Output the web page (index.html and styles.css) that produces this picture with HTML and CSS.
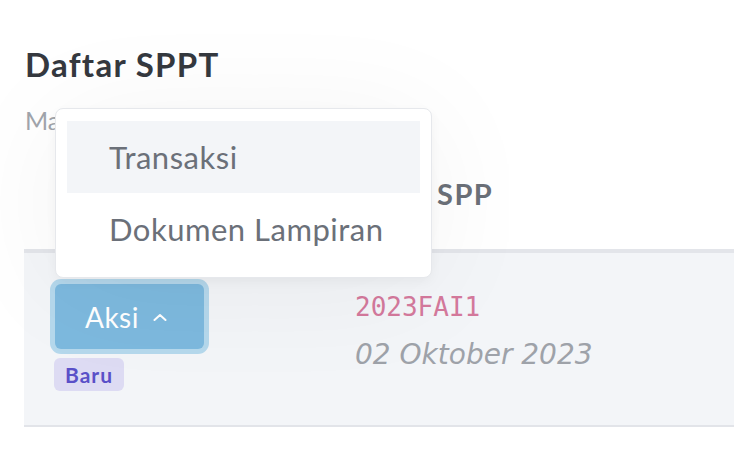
FILE: index.html
```html
<!DOCTYPE html>
<html lang="id">
<head>
    <meta charset="UTF-8">
    <meta name="viewport" content="width=device-width, initial-scale=1.0">
    <title>Daftar SPPT</title>
    <link rel="stylesheet" href="styles.css">
</head>
<body>
    <div class="card">
        <h1 class="title">Daftar SPPT</h1>
        <p class="subtitle">Manajemen data SPPT</p>

        <table class="sppt-table">
            <thead>
                <tr>
                    <th class="col-action"></th>
                    <th class="col-spp">SPP</th>
                </tr>
            </thead>
            <tbody>
                <tr>
                    <td class="col-action">
                        <div class="action-wrap">
                            <button class="btn-aksi" type="button">
                                Aksi
                                <svg class="chevron" viewBox="0 0 14 8" width="14" height="8" aria-hidden="true">
                                    <path d="M1.5 7 L7 2 L12.5 7" fill="none" stroke="#fff" stroke-width="2" stroke-linecap="round" stroke-linejoin="round"/>
                                </svg>
                            </button>
                            <span class="badge">Baru</span>

                            <ul class="dropdown">
                                <li class="dropdown-item active">Transaksi</li>
                                <li class="dropdown-item">Dokumen Lampiran</li>
                            </ul>
                        </div>
                    </td>
                    <td>
                        <code class="spp-code">2023FAI1</code>
                        <div class="spp-date">02 Oktober 2023</div>
                    </td>
                </tr>
            </tbody>
        </table>
    </div>
</body>
</html>
```

FILE: styles.css
```css
body {
    margin: 0;
    background-color: #fff;
    font-family: Lato, "Noto Sans", sans-serif;
    color: #374151;
    overflow: hidden;
}

.card {
    padding: 44px 0 0 24px;
}

.title {
    margin: 0 0 0 1px;
    font-size: 33px;
    font-weight: 700;
    letter-spacing: 1.3px;
    line-height: 40px;
    color: #35393f;
}

.subtitle {
    margin: 20px 0 0 1px;
    font-size: 25px;
    line-height: 32px;
    color: #a1a5ac;
}

.sppt-table {
    width: 760px;
    border-collapse: collapse;
    margin-top: 38px;
}

.sppt-table th {
    text-align: left;
    padding: 0 31px 35px;
    font-size: 29px;
    font-weight: 700;
    letter-spacing: 1.5px;
    line-height: 40px;
    color: #6b7078;
    border-bottom: 4px solid #e3e5ea;
}

.sppt-table th.col-spp {
    padding-left: 113px;
}

.sppt-table td {
    vertical-align: top;
    padding: 31px 31px 34px;
    background-color: #f3f5f8;
    border-bottom: 2px solid #e2e4e9;
}

.col-action {
    width: 238px;
}

.action-wrap {
    position: relative;
    display: flex;
    flex-direction: column;
    align-items: flex-start;
    gap: 9px;
}

.btn-aksi {
    display: flex;
    align-items: center;
    gap: 14px;
    width: 149px;
    height: 65px;
    padding: 0 0 0 30px;
    border: none;
    border-radius: 6px;
    background-color: #7db9de;
    box-shadow: 0 0 0 5px #b5d8ec;
    color: #fff;
    font-family: inherit;
    font-size: 28px;
    letter-spacing: 0.5px;
    cursor: pointer;
}

.chevron {
    margin-top: 1px;
}

.badge {
    margin-left: -1px;
    padding: 4px 11px;
    border-radius: 6px;
    background-color: #dddbf3;
    color: #5a50c8;
    font-size: 21px;
    font-weight: 700;
    letter-spacing: 1px;
    line-height: 25px;
}

.dropdown {
    position: absolute;
    left: 0;
    bottom: 100%;
    box-sizing: border-box;
    width: 377px;
    margin: 0 0 6px;
    padding: 12px 11px;
    list-style: none;
    background-color: #fff;
    border: 1px solid #e6e8ec;
    border-radius: 8px;
    box-shadow: 0 4px 12px rgba(0, 0, 0, 0.04), 0 10px 120px rgba(0, 0, 0, 0.05);
}

.dropdown-item {
    padding: 0 42px;
    font-size: 31px;
    letter-spacing: 0.5px;
    line-height: 72px;
    white-space: nowrap;
    color: #6b7079;
}

.dropdown-item.active {
    background-color: #f3f5f8;
}

.spp-code {
    display: block;
    margin-top: 8px;
    font-family: "DejaVu Sans Mono", monospace;
    font-size: 26px;
    color: #d4799c;
}

.spp-date {
    margin-top: 16px;
    font-family: "DejaVu Sans", sans-serif;
    font-style: italic;
    font-size: 28px;
    color: #9ea2a9;
}
```
